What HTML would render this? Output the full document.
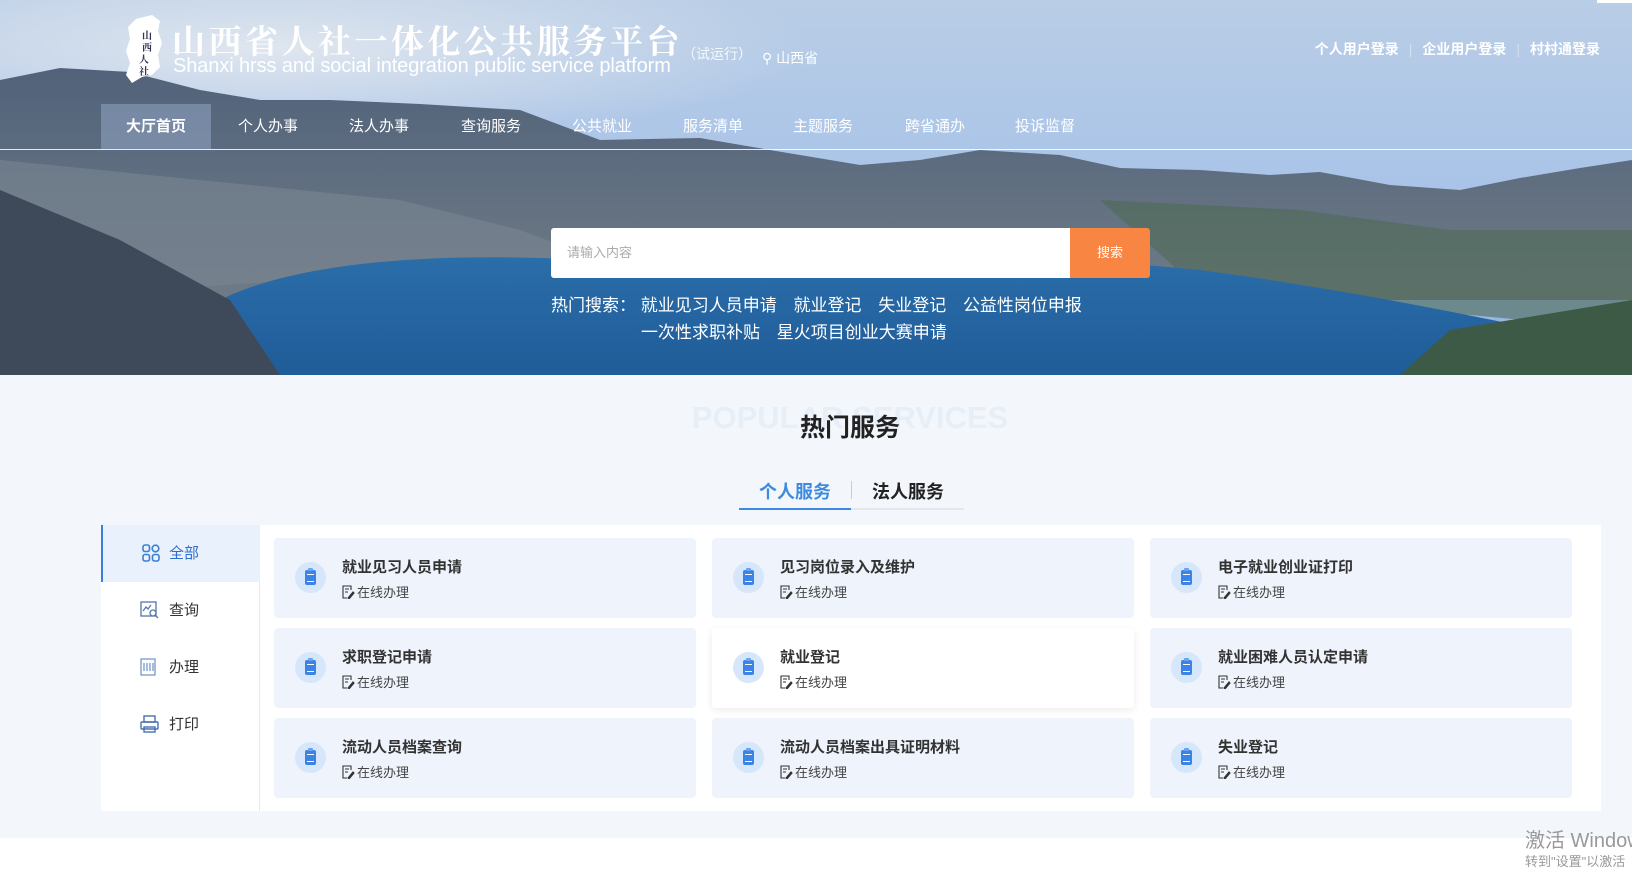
<!DOCTYPE html>
<html><head><meta charset="utf-8">
<style>
*{margin:0;padding:0;box-sizing:border-box}
body{width:1632px;height:872px;overflow:hidden;background:#fff;font-family:"Liberation Sans","Noto Sans CJK SC",sans-serif;position:relative}
.abs{position:absolute}
.banner{position:absolute;left:0;top:0;width:1632px;height:375px;overflow:hidden}
.nav{position:absolute;top:104px;height:45px;line-height:45px;color:#fff;font-size:15px;text-align:center;width:110px}
.nav.act{background:rgba(140,160,190,.6);font-weight:bold;left:101px}
.login{position:absolute;top:39px;right:32px;color:#fff;font-size:14px;font-weight:bold}
.login span.sep{color:rgba(255,255,255,.4);margin:0 10px;font-weight:normal}
.hot{position:absolute;color:#fff;font-size:17px;white-space:nowrap}
.hot b{font-weight:normal;margin-right:12px}
.sec{position:absolute;left:0;top:375px;width:1632px;height:463px;background:#f3f7fb}
.box{position:absolute;left:101px;top:525px;width:1500px;height:286px;background:#fff}
.side{position:absolute;left:0;top:0;width:159px;height:286px;border-right:1px solid #e3eaf3}
.si{position:absolute;left:0;width:159px;height:57px;font-size:15px;color:#333;line-height:57px;padding-left:68px}
.si.act{background:#e8f1fc;border-left:2px solid #3d7fd6;color:#2e6fce;padding-left:66px}
.si svg{position:absolute;left:39px;top:19px}
.card{position:absolute;width:422px;height:80px;background:#eef3fc;border-radius:4px}
.card.w{background:#fff;box-shadow:0 2px 8px rgba(0,0,0,.08)}
.card .ic{position:absolute;left:21px;top:24px;width:31px;height:31px;border-radius:50%;background:#d6e6fb}
.card .ic i{position:absolute;left:10px;top:8px;width:11px;height:15px;background:#3b84e6;border-radius:2px}
.card .ic i:before{content:"";position:absolute;left:3px;top:-2px;width:5px;height:3px;background:#6aa4f0;border-radius:1px}
.card .ic i:after{content:"";position:absolute;left:2px;top:4px;width:7px;height:6px;border-top:1.5px solid #fff;border-bottom:1.5px solid #fff}
.card .t{position:absolute;left:68px;top:18px;font-size:15px;font-weight:bold;color:#333}
.card .s{position:absolute;left:68px;top:44px;font-size:13px;color:#444}
.card .s svg{vertical-align:-2px;margin-right:2px}
</style></head><body>
<div class="banner">
<svg width="1632" height="375" viewBox="0 0 1632 375">
<defs>
<linearGradient id="sky" x1="0" y1="0" x2="0" y2="1"><stop offset="0" stop-color="#b9cde6"/><stop offset=".5" stop-color="#a9c4e8"/><stop offset="1" stop-color="#8fb2df"/></linearGradient>
<linearGradient id="mt" x1="0" y1="0" x2="0" y2="1"><stop offset="0" stop-color="#51627a"/><stop offset="1" stop-color="#6f7b86"/></linearGradient>
<linearGradient id="lake" x1="0" y1="0" x2="0" y2="1"><stop offset="0" stop-color="#2b6eaa"/><stop offset="1" stop-color="#1f5c98"/></linearGradient>
<radialGradient id="cl" cx=".3" cy=".3" r=".6"><stop offset="0" stop-color="#dfe6ef"/><stop offset="1" stop-color="#dfe6ef" stop-opacity="0"/></radialGradient>
</defs>
<rect width="1632" height="375" fill="url(#sky)"/>
<rect x="0" y="0" width="900" height="160" fill="url(#cl)"/>
<polygon points="0,80 60,68 130,72 200,90 260,100 330,100 420,104 520,110 600,140 700,138 770,150 860,165 920,160 980,150 1060,155 1120,168 1200,170 1270,175 1320,172 1390,185 1460,190 1520,178 1580,168 1632,160 1632,300 0,300" fill="url(#mt)"/>
<polygon points="0,160 200,180 400,200 520,230 600,260 0,300" fill="#7a8591" opacity=".6"/>
<polygon points="1100,200 1300,210 1450,230 1632,230 1632,330 1200,290" fill="#4f6a55" opacity=".6"/>
<path d="M220,300 C300,260 450,250 620,262 C800,250 1000,250 1200,270 C1350,290 1500,320 1632,350 L1632,375 L0,375 L0,340 Z" fill="url(#lake)"/>
<polygon points="0,190 120,240 230,300 280,375 0,375" fill="#3e4a5a"/>
<polygon points="1450,330 1632,300 1632,375 1400,375" fill="#3c5a45"/>
</svg>
</div>
<div class="abs" style="left:0;top:149px;width:1632px;height:1px;background:rgba(255,255,255,.85)"></div>
<div class="abs" style="left:1597px;top:0;width:35px;height:3px;background:#fff"></div>
<svg class="abs" style="left:122px;top:15px" width="46" height="68" viewBox="0 0 46 68"><path d="M14,4 L30,0 L38,6 L36,16 L40,28 L36,40 L38,52 L30,60 L20,62 L10,68 L4,60 L8,48 L4,36 L8,24 L6,12 Z" fill="#fff"/><text x="20" y="24" font-size="10" fill="#335" font-family="Noto Serif CJK SC,serif" font-weight="bold">山</text><text x="20" y="36" font-size="10" fill="#335" font-family="Noto Serif CJK SC,serif" font-weight="bold">西</text><text x="17" y="48" font-size="10" fill="#335" font-family="Noto Serif CJK SC,serif" font-weight="bold">人</text><text x="17" y="60" font-size="10" fill="#335" font-family="Noto Serif CJK SC,serif" font-weight="bold">社</text></svg>
<div class="abs" style="left:172px;top:18px;line-height:44px;color:#fff;font-size:33px;font-weight:bold;font-family:'Noto Serif CJK SC',serif;letter-spacing:3.5px;white-space:nowrap">山西省人社一体化公共服务平台</div>
<div class="abs" style="left:173px;top:55px;line-height:22px;color:#fff;font-size:20px;white-space:nowrap;letter-spacing:-0.1px">Shanxi hrss and social integration public service platform</div>
<div class="abs" style="left:682px;top:44px;color:#fff;font-size:14px;opacity:.85">（试运行）</div>
<div class="abs" style="left:762px;top:48px;color:#fff;font-size:14px">&#9906; 山西省</div>
<div class="login">个人用户登录<span class="sep">|</span>企业用户登录<span class="sep">|</span>村村通登录</div>
<div class="nav act">大厅首页</div>
<div class="nav" style="left:213px">个人办事</div>
<div class="nav" style="left:324px">法人办事</div>
<div class="nav" style="left:436px">查询服务</div>
<div class="nav" style="left:547px">公共就业</div>
<div class="nav" style="left:658px">服务清单</div>
<div class="nav" style="left:768px">主题服务</div>
<div class="nav" style="left:880px">跨省通办</div>
<div class="nav" style="left:990px">投诉监督</div>
<div class="abs" style="left:551px;top:228px;width:519px;height:50px;background:#fff;border-radius:3px 0 0 3px;color:#aaa;font-size:13px;line-height:50px;padding-left:16px">请输入内容</div>
<div class="abs" style="left:1070px;top:228px;width:80px;height:50px;background:#f98543;border-radius:0 3px 3px 0;color:#fff;font-size:13px;line-height:50px;text-align:center">搜索</div>
<div class="hot" style="left:551px;top:291px">热门搜索： <b>就业见习人员申请</b> <b>就业登记</b> <b>失业登记</b> <b>公益性岗位申报</b></div>
<div class="hot" style="left:641px;top:318px"><b>一次性求职补贴</b> <b>星火项目创业大赛申请</b></div>
<div class="sec"></div>
<div class="abs" style="left:0;top:400px;width:1700px;text-align:center;font-size:31px;font-weight:bold;color:#e6eef8">POPULAR SERVICES</div>
<div class="abs" style="left:0;top:408px;width:1700px;text-align:center;font-size:25px;font-weight:bold;color:#222">热门服务</div>
<div class="abs" style="left:739px;top:478px;width:112px;text-align:center;font-size:18px;font-weight:bold;color:#3d8ae0">个人服务</div>
<div class="abs" style="left:851px;top:481px;width:1px;height:18px;background:#ccc"></div>
<div class="abs" style="left:852px;top:478px;width:112px;text-align:center;font-size:18px;font-weight:bold;color:#222">法人服务</div>
<div class="abs" style="left:739px;top:508px;width:225px;height:2px;background:#e3e8ef"></div>
<div class="abs" style="left:739px;top:508px;width:112px;height:2px;background:#3d8ae0"></div>
<div class="box">
<div class="side">
<div class="si act" style="top:0"><svg width="18" height="18" viewBox="0 0 18 18" fill="none" stroke="#3d7fd6" stroke-width="1.6"><rect x="1" y="1" width="6.5" height="6.5" rx="2"/><circle cx="13.5" cy="4.5" r="3.3"/><rect x="1" y="10.5" width="6.5" height="6.5" rx="2"/><rect x="10.5" y="10.5" width="6.5" height="6.5" rx="2"/></svg>全部</div>
<div class="si" style="top:57px"><svg width="19" height="18" viewBox="0 0 19 18" fill="none" stroke="#5577aa" stroke-width="1.3"><rect x="1" y="1" width="15" height="14"/><path d="M3,10 L6,6 L8,8 L11,4"/><circle cx="13" cy="12" r="3" fill="#fff"/><path d="M15,14 L18,17"/></svg>查询</div>
<div class="si" style="top:114px"><svg width="18" height="18" viewBox="0 0 18 18" fill="none" stroke="#7799cc" stroke-width="1.3"><rect x="1" y="1" width="14" height="16"/><path d="M4,5 V13 M7,5 V13 M10,5 V13 M13,5 V13"/></svg>办理</div>
<div class="si" style="top:171px"><svg width="19" height="18" viewBox="0 0 19 18" fill="none" stroke="#4a70b0" stroke-width="1.4"><rect x="4" y="1" width="11" height="6"/><rect x="1" y="7" width="17" height="7" rx="1"/><rect x="4" y="12" width="11" height="5"/></svg>打印</div>
</div>
</div>
<div class="card" style="left:274px;top:538px"><div class="ic"><i></i></div><div class="t">就业见习人员申请</div><div class="s"><svg width="13" height="14" viewBox="0 0 13 14" fill="none" stroke="#333" stroke-width="1.1"><path d="M9,5 V1 H1 V13 H5"/><path d="M3,4 H7 M3,7 H6"/><path d="M6,13 L11,7 L12,8 L7,14 Z" fill="#333"/></svg>在线办理</div></div>
<div class="card" style="left:712px;top:538px"><div class="ic"><i></i></div><div class="t">见习岗位录入及维护</div><div class="s"><svg width="13" height="14" viewBox="0 0 13 14" fill="none" stroke="#333" stroke-width="1.1"><path d="M9,5 V1 H1 V13 H5"/><path d="M3,4 H7 M3,7 H6"/><path d="M6,13 L11,7 L12,8 L7,14 Z" fill="#333"/></svg>在线办理</div></div>
<div class="card" style="left:1150px;top:538px"><div class="ic"><i></i></div><div class="t">电子就业创业证打印</div><div class="s"><svg width="13" height="14" viewBox="0 0 13 14" fill="none" stroke="#333" stroke-width="1.1"><path d="M9,5 V1 H1 V13 H5"/><path d="M3,4 H7 M3,7 H6"/><path d="M6,13 L11,7 L12,8 L7,14 Z" fill="#333"/></svg>在线办理</div></div>
<div class="card" style="left:274px;top:628px"><div class="ic"><i></i></div><div class="t">求职登记申请</div><div class="s"><svg width="13" height="14" viewBox="0 0 13 14" fill="none" stroke="#333" stroke-width="1.1"><path d="M9,5 V1 H1 V13 H5"/><path d="M3,4 H7 M3,7 H6"/><path d="M6,13 L11,7 L12,8 L7,14 Z" fill="#333"/></svg>在线办理</div></div>
<div class="card w" style="left:712px;top:628px"><div class="ic"><i></i></div><div class="t">就业登记</div><div class="s"><svg width="13" height="14" viewBox="0 0 13 14" fill="none" stroke="#333" stroke-width="1.1"><path d="M9,5 V1 H1 V13 H5"/><path d="M3,4 H7 M3,7 H6"/><path d="M6,13 L11,7 L12,8 L7,14 Z" fill="#333"/></svg>在线办理</div></div>
<div class="card" style="left:1150px;top:628px"><div class="ic"><i></i></div><div class="t">就业困难人员认定申请</div><div class="s"><svg width="13" height="14" viewBox="0 0 13 14" fill="none" stroke="#333" stroke-width="1.1"><path d="M9,5 V1 H1 V13 H5"/><path d="M3,4 H7 M3,7 H6"/><path d="M6,13 L11,7 L12,8 L7,14 Z" fill="#333"/></svg>在线办理</div></div>
<div class="card" style="left:274px;top:718px"><div class="ic"><i></i></div><div class="t">流动人员档案查询</div><div class="s"><svg width="13" height="14" viewBox="0 0 13 14" fill="none" stroke="#333" stroke-width="1.1"><path d="M9,5 V1 H1 V13 H5"/><path d="M3,4 H7 M3,7 H6"/><path d="M6,13 L11,7 L12,8 L7,14 Z" fill="#333"/></svg>在线办理</div></div>
<div class="card" style="left:712px;top:718px"><div class="ic"><i></i></div><div class="t">流动人员档案出具证明材料</div><div class="s"><svg width="13" height="14" viewBox="0 0 13 14" fill="none" stroke="#333" stroke-width="1.1"><path d="M9,5 V1 H1 V13 H5"/><path d="M3,4 H7 M3,7 H6"/><path d="M6,13 L11,7 L12,8 L7,14 Z" fill="#333"/></svg>在线办理</div></div>
<div class="card" style="left:1150px;top:718px"><div class="ic"><i></i></div><div class="t">失业登记</div><div class="s"><svg width="13" height="14" viewBox="0 0 13 14" fill="none" stroke="#333" stroke-width="1.1"><path d="M9,5 V1 H1 V13 H5"/><path d="M3,4 H7 M3,7 H6"/><path d="M6,13 L11,7 L12,8 L7,14 Z" fill="#333"/></svg>在线办理</div></div>
<div class="abs" style="left:1525px;top:824px;font-size:20px;color:#999;white-space:nowrap">激活 Windows</div>
<div class="abs" style="left:1525px;top:851px;font-size:13px;color:#999;white-space:nowrap">转到"设置"以激活</div>
</body></html>
